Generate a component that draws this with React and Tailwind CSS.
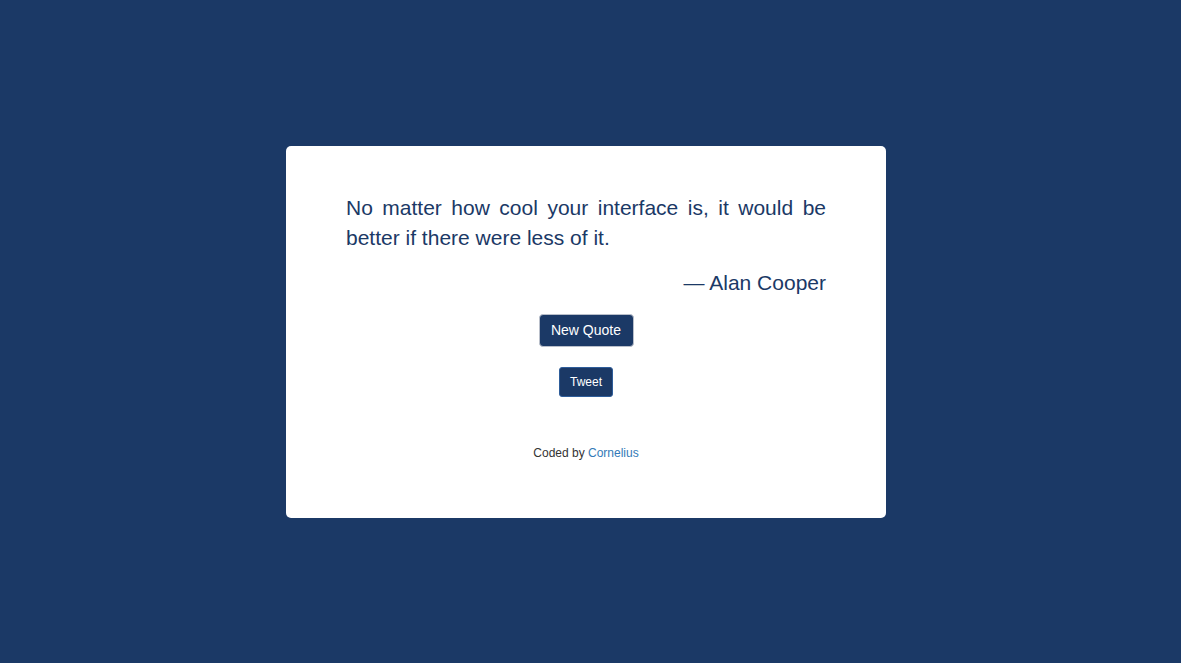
import React from "react";

const App = () => {
  return (
    <div className="min-h-screen w-full bg-[#1b3966] flex items-center justify-center pr-[9px] font-['Liberation_Sans',Arial,sans-serif]">
      <div className="w-[600px] bg-white rounded-[5px] pt-[47px] pb-[56px] px-[60px] flex flex-col">
        <p className="text-[21px] leading-[30px] text-[#1b3966] text-justify">
          No matter how cool your interface is, it would be better if there were less of it.
        </p>
        <p className="mt-[15px] text-[21px] leading-[30px] text-[#1b3966] text-right">
          — Alan Cooper
        </p>
        <div className="mt-[16px] flex justify-center">
          <button className="w-[95px] h-[33px] bg-[#1b3966] text-white text-[14px] rounded-[4px] border border-[#b9bfca]">
            New Quote
          </button>
        </div>
        <div className="mt-[20px] flex justify-center">
          <button className="w-[54px] h-[30px] bg-[#1b3966] text-white text-[12px] rounded-[3px] border border-[#2e5d9a]">
            Tweet
          </button>
        </div>
        <p className="mt-[48px] text-center text-[12px] leading-[17px] text-[#333]">
          Coded by <a className="text-[#337ab7]">Cornelius</a>
        </p>
      </div>
    </div>
  );
};

export default App;
